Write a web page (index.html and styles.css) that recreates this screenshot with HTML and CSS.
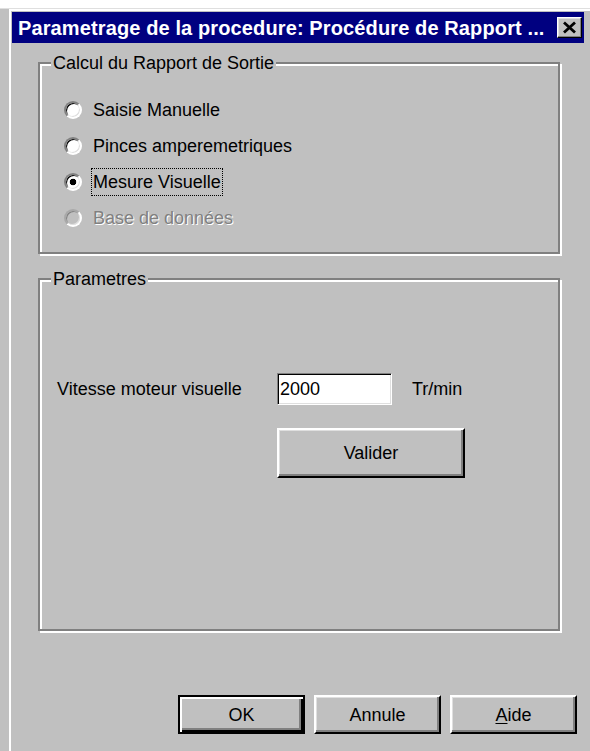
FILE: index.html
```html
<!DOCTYPE html>
<html lang="fr">
<head>
<meta charset="utf-8">
<title>Parametrage de la procedure</title>
<link rel="stylesheet" href="styles.css">
</head>
<body>
<div class="window">
  <div class="frame">
    <div class="titlebar">
      <span class="title">Parametrage de la procedure: Procédure de Rapport ...</span>
      <button class="close" type="button" aria-label="Fermer">
        <svg width="15" height="13" viewBox="0 0 15 13">
          <path d="M2 1.5 L13 11.5 M13 1.5 L2 11.5" stroke="#000" stroke-width="2.8" fill="none"/>
        </svg>
      </button>
    </div>

    <div class="content">
      <fieldset class="group group-calc">
        <legend>Calcul du Rapport de Sortie</legend>
        <div class="radio-list">
          <div class="option"><span class="radio"></span><span class="label">Saisie Manuelle</span></div>
          <div class="option"><span class="radio"></span><span class="label">Pinces amperemetriques</span></div>
          <div class="option"><span class="radio checked"></span><span class="label focused">Mesure Visuelle</span></div>
          <div class="option disabled"><span class="radio"></span><span class="label">Base de données</span></div>
        </div>
      </fieldset>

      <fieldset class="group group-params">
        <legend>Parametres</legend>
        <div class="speed-form">
          <span class="field-label">Vitesse moteur visuelle</span>
          <div class="textbox">2000</div>
          <span class="unit">Tr/min</span>
          <button class="btn btn-validate" type="button">Valider</button>
        </div>
      </fieldset>

      <div class="actions">
        <button class="btn btn-default" type="button">OK</button>
        <button class="btn" type="button">Annule</button>
        <button class="btn" type="button"><u>A</u>ide</button>
      </div>
    </div>
  </div>
</div>
</body>
</html>
```

FILE: styles.css
```css
html, body {
  margin: 0;
  padding: 0;
}

body {
  background: #ffffff;
  font-family: "Liberation Sans", Arial, sans-serif;
  font-size: 18px;
  line-height: 20px;
  color: #000;
}

/* Dialog window with its raised frame */
.window {
  box-sizing: border-box;
  margin-top: 8px;
  height: 743px;
  background: #c0c0c0;
  border-top: 1px solid #dfdfdf;
  padding-left: 9px;
  overflow: hidden;
}

.frame {
  box-sizing: border-box;
  height: 100%;
  border-top: 2px solid #fff;
  border-left: 2px solid #fff;
  padding: 1px 6px 0 1px;
}

/* Caption bar */
.titlebar {
  height: 31px;
  background: #000080;
  color: #fff;
  display: flex;
  align-items: center;
  justify-content: space-between;
  padding: 0 2px 0 6px;
}

.title {
  font-weight: bold;
  font-size: 20px;
  letter-spacing: 0.12px;
  white-space: nowrap;
}

.close {
  box-sizing: border-box;
  width: 25px;
  height: 21px;
  margin: 0;
  padding: 0 1px 1px 0;
  background: #c0c0c0;
  border: 1px solid;
  border-color: #fff #000 #000 #fff;
  box-shadow: inset -1px -1px 0 #808080, inset 1px 1px 0 #dfdfdf;
  display: flex;
  align-items: center;
  justify-content: center;
}

.close svg {
  display: block;
}

/* Client area */
.content {
  padding-top: 10px;
  padding-left: 26px;
}

/* Etched group boxes */
.group {
  box-sizing: border-box;
  width: 522px;
  min-width: 0;
  margin: 0;
  padding: 0;
  border: 2px solid #808080;
  box-shadow: inset 2px 2px 0 #fff, 2px 2px 0 #fff;
}

.group legend {
  margin-left: 11px;
  padding: 0 2px;
  line-height: 20px;
  background: #c0c0c0;
}

.group-params {
  margin-top: 15px;
}

/* Radio buttons */
.radio-list {
  display: flex;
  flex-direction: column;
  padding: 19px 0 16px 24px;
}

.option {
  height: 36px;
  display: flex;
  align-items: center;
}

.radio {
  box-sizing: border-box;
  flex: none;
  width: 18px;
  height: 18px;
  border-radius: 50%;
  border: 2px solid;
  border-color: #808080 #fff #fff #808080;
  background: #fff;
  box-shadow: inset 1px 1px 0 #000, inset -1px -1px 0 #dfdfdf;
}

.radio.checked {
  background: radial-gradient(circle, #000 0 3px, #fff 3.6px);
}

.label {
  margin-left: 10px;
  padding: 3px 1px;
}

.label.focused {
  outline: 1px dotted #000;
}

.option.disabled .radio {
  background: #c0c0c0;
  box-shadow: inset 1px 1px 0 #808080, inset -1px -1px 0 #dfdfdf;
  border-color: #a8a8a8 #fff #fff #a8a8a8;
}

.option.disabled .label {
  color: #808080;
  text-shadow: 1px 1px 0 #fff;
}

/* Speed entry */
.speed-form {
  display: grid;
  grid-template-columns: 200px 115px auto;
  grid-template-rows: 32px 50px;
  column-gap: 20px;
  row-gap: 23px;
  align-items: center;
  padding: 84px 0 151px 17px;
}

.textbox {
  box-sizing: border-box;
  height: 32px;
  background: #fff;
  border: 1px solid;
  border-color: #808080 #fff #fff #808080;
  box-shadow: inset 1px 1px 0 #000, inset -1px -1px 0 #dfdfdf;
  padding-left: 2px;
  line-height: 30px;
}

.btn-validate {
  grid-column: 2 / span 2;
  grid-row: 2;
  justify-self: start;
  margin-left: 4px;
  width: 188px;
  height: 50px;
}

/* Push buttons */
.btn {
  box-sizing: border-box;
  margin: 0;
  padding: 0;
  font: inherit;
  color: #000;
  background: #c0c0c0;
  border: 2px solid;
  border-color: #fff #000 #000 #fff;
  box-shadow: inset -2px -2px 0 #808080, inset 1px 1px 0 #dfdfdf;
  display: flex;
  align-items: center;
  justify-content: center;
}

.btn u {
  text-underline-offset: 2px;
}

.actions {
  display: flex;
  justify-content: flex-end;
  gap: 9px;
  margin-top: 64px;
  padding-right: 7px;
}

.actions .btn {
  width: 127px;
  height: 39px;
}

.actions .btn-default {
  border-color: #000;
  box-shadow: inset 2px 2px 0 #fff, inset -2px -2px 0 #000, inset -4px -4px 0 #808080;
}
```
